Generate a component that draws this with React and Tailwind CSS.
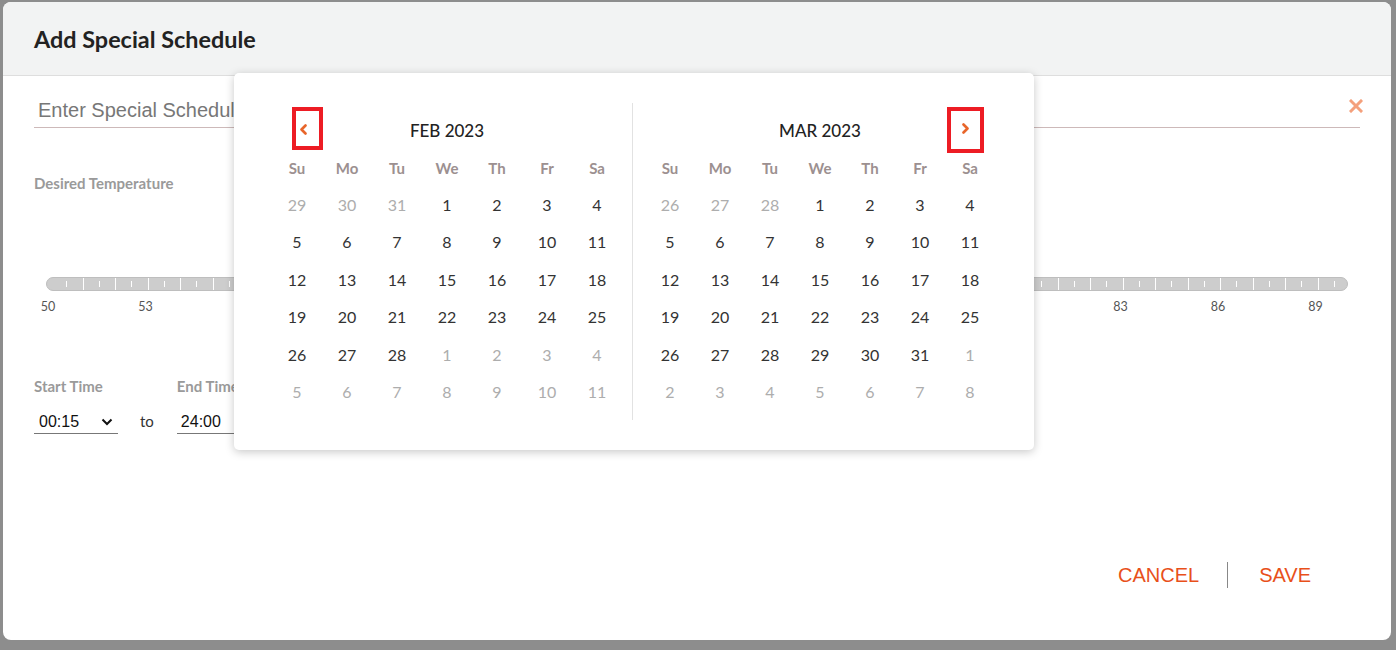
import React from 'react'

const WEEKDAYS = ['Su', 'Mo', 'Tu', 'We', 'Th', 'Fr', 'Sa']

function buildMonth(prevStart, prevEnd, daysInMonth, nextCount) {
  const cells = []
  for (let d = prevStart; d <= prevEnd; d++) cells.push({ d, muted: true })
  for (let d = 1; d <= daysInMonth; d++) cells.push({ d, muted: false })
  for (let d = 1; d <= nextCount; d++) cells.push({ d, muted: true })
  return cells
}

const FEB = buildMonth(29, 31, 28, 11)
const MAR = buildMonth(26, 28, 31, 8)

const LABELS = Array.from({ length: 14 }, (_, i) => 50 + i * 3)
const TICKS = Array.from({ length: 79 }, (_, i) => i + 1)

function Chevron({ dir }) {
  return (
    <svg width="9" height="11" viewBox="0 0 9 11" fill="none">
      {dir === 'left' ? (
        <path d="M6.5 1.5 L2.5 5.5 L6.5 9.5" stroke="#e8652a" strokeWidth="2.6" strokeLinecap="round" strokeLinejoin="round" />
      ) : (
        <path d="M2.5 1.5 L6.5 5.5 L2.5 9.5" stroke="#e8652a" strokeWidth="2.6" strokeLinecap="round" strokeLinejoin="round" />
      )}
    </svg>
  )
}

function Month({ title, cells, nav }) {
  return (
    <div className="w-[350px] flex flex-col">
      <div className="relative h-[54px] flex items-center justify-center text-[17px] font-medium text-[#222] font-['Lato',sans-serif] pt-[2px]">
        {title}
        {nav === 'left' && (
          <div className="absolute left-[20px] top-[4px] w-[31px] h-[43px] border-[4px] border-[#ed1c24] flex items-center justify-center pr-[9px] pt-[1px]">
            <Chevron dir="left" />
          </div>
        )}
        {nav === 'right' && (
          <div className="absolute left-[302px] top-[4px] w-[37px] h-[46px] border-[4px] border-[#ed1c24] flex items-center justify-center pb-[4px]">
            <Chevron dir="right" />
          </div>
        )}
      </div>
      <div className="grid grid-cols-7 h-[22px] items-center">
        {WEEKDAYS.map(w => (
          <div key={w} className="text-center text-[15px] font-bold text-[#9c9090] font-['Lato',sans-serif]">{w}</div>
        ))}
      </div>
      <div className="grid grid-cols-7 mt-[7px]">
        {cells.map((c, i) => (
          <div
            key={i}
            className={`h-[37.5px] flex items-center justify-center text-[16px] font-['Lato',sans-serif] ${c.muted ? 'text-[#adadad]' : 'text-[#333]'}`}
          >
            {c.d}
          </div>
        ))}
      </div>
    </div>
  )
}

export default function App() {
  return (
    <div className="w-[1396px] h-[650px] bg-[#8d8d8d] pt-[2px] pl-[3px] overflow-hidden">
      <div className="relative w-[1388px] h-[638px] bg-white rounded-[8px] overflow-hidden flex flex-col">
        <div className="h-[74px] shrink-0 bg-[#f2f3f3] border-b border-[#dedede] px-[31px] flex items-center">
          <h2 className="text-[23.4px] font-bold text-[#222] font-['Lato',sans-serif] pt-[2px]">Add Special Schedule</h2>
        </div>

        <div className="flex-1 flex flex-col px-[31px]">
          <div className="relative mt-[18px] h-[34px] border-b border-[#cdb9b9] w-[1326px]">
            <input
              className="w-full h-full outline-none text-[20px] text-[#333] placeholder-[#777] font-['Liberation_Sans',Arial,sans-serif] pl-[4px]"
              placeholder="Enter Special Schedule Name"
            />
            <svg className="absolute right-[-3px] top-[5px]" width="14" height="14" viewBox="0 0 14 14">
              <path d="M2 2 L12 12 M12 2 L2 12" stroke="#f4a07c" strokeWidth="3" strokeLinecap="square" />
            </svg>
          </div>

          <div className="mt-[45px] text-[15px] font-bold text-[#9a9a9a] font-['Lato',sans-serif] leading-[20px]">Desired Temperature</div>

          <div className="relative mt-[84px] ml-[12px] w-[1302px]">
            <div className="relative h-[14px] rounded-full bg-[#cdcdcd] border border-[#bebebe] overflow-hidden">
              {TICKS.map(t => (
                <div
                  key={t}
                  className={`absolute w-px bg-white ${t % 2 === 0 ? 'top-0 bottom-0' : 'top-[3px] bottom-[3px]'}`}
                  style={{ left: `${3 + t * 16.25}px` }}
                />
              ))}
            </div>
            <div className="relative h-[24px]">
              {LABELS.map((v, i) => (
                <span
                  key={v}
                  className="absolute top-[9px] -translate-x-1/2 text-[12.5px] text-[#555] font-['Lato',sans-serif] leading-[14px]"
                  style={{ left: `${2 + i * 97.5}px` }}
                >
                  {v}
                </span>
              ))}
            </div>
          </div>

          <div className="mt-[61px] flex items-start">
            <div className="flex flex-col">
              <span className="text-[15px] font-bold text-[#9a9a9a] font-['Lato',sans-serif] leading-[20px]">Start Time</span>
              <div className="mt-[12px] w-[84px] h-[26px] border-b border-[#777] flex items-center justify-between pl-[5px] pr-[5px] pt-[2px]">
                <span className="text-[16px] text-[#111] font-['Liberation_Sans',Arial,sans-serif]">00:15</span>
                <svg width="12" height="8" viewBox="0 0 12 8">
                  <path d="M1.5 1.5 L6 6 L10.5 1.5" stroke="#111" strokeWidth="2" fill="none" />
                </svg>
              </div>
            </div>
            <span className="mt-[33px] ml-[22px] text-[15px] text-[#333] font-['Lato',sans-serif] leading-[25px]">to</span>
            <div className="flex flex-col ml-[23px]">
              <span className="text-[15px] font-bold text-[#9a9a9a] font-['Lato',sans-serif] leading-[20px]">End Time</span>
              <div className="mt-[12px] w-[84px] h-[26px] border-b border-[#777] flex items-center pl-[4px] pt-[2px]">
                <span className="text-[16px] text-[#111] font-['Liberation_Sans',Arial,sans-serif]">24:00</span>
              </div>
            </div>
          </div>

          <div className="mt-auto mb-[52px] flex items-center justify-end pr-[49px] h-[26px]">
            <button className="text-[20px] text-[#e8501a] font-['Liberation_Sans',Arial,sans-serif]">CANCEL</button>
            <div className="w-px h-[26px] bg-[#888] ml-[28px] mr-[31px]" />
            <button className="text-[20px] text-[#e8501a] font-['Liberation_Sans',Arial,sans-serif]">SAVE</button>
          </div>
        </div>

        <div className="absolute left-[231px] top-[71px] w-[800px] h-[377px] bg-white rounded-[5px] shadow-[0_2px_10px_rgba(0,0,0,0.22)] flex items-start pt-[30px] pl-[38px]">
          <Month title="FEB 2023" cells={FEB} nav="left" />
          <div className="w-px h-[317px] bg-[#e2e2e2] ml-[10px] mr-[12px]" />
          <Month title="MAR 2023" cells={MAR} nav="right" />
        </div>
      </div>
    </div>
  )
}
